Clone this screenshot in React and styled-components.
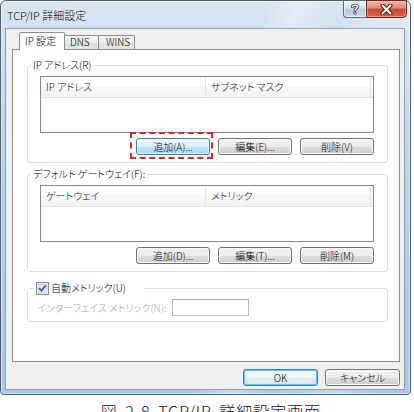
import React from "react";
import styled, { createGlobalStyle, css } from "styled-components";

const GlobalStyle = createGlobalStyle`
  html, body { margin: 0; padding: 0; background: #ffffff; }
  body {
    width: 414px;
    height: 412px;
    overflow: hidden;
    font-family: "Noto Sans CJK JP", "Noto Sans", sans-serif;
    color: #000;
  }
  #root { width: 414px; }
`;

const uiFont = css`
  font-family: "Noto Sans CJK JP", "Noto Sans", sans-serif;
  font-size: 10px;
  font-weight: 300;
  font-feature-settings: "palt";
`;

const Window = styled.div`
  box-sizing: border-box;
  width: 411px;
  border: 1px solid #4e5d72;
  border-radius: 6px 6px 4px 4px;
  padding: 0 5px 4px 4px;
  background:
    linear-gradient(100deg, rgba(255,255,255,0) 55%, rgba(255,255,255,0.35) 62%, rgba(255,255,255,0) 70%, rgba(255,255,255,0.3) 85%, rgba(255,255,255,0) 92%),
    linear-gradient(180deg, #dae5f1 0px, #d2e0ef 28px, #bcd3eb 120px, #a9c7e7 100%);
  box-shadow: inset 0 0 0 1px rgba(255, 255, 255, 0.55);
`;

const TitleBar = styled.div`
  display: flex;
  align-items: center;
  height: 27px;
  padding-left: 2px;
`;

const Title = styled.div`
  font-family: "Noto Sans CJK JP", "Noto Sans", sans-serif;
  font-size: 11px;
  font-weight: 300;
  color: #000;
  text-shadow: 0 0 6px rgba(255, 255, 255, 0.95);
`;

const Controls = styled.div`
  display: flex;
  margin-left: auto;
  align-self: flex-start;
  margin-top: -1px;
  margin-right: -2px;
`;

const CaptionButton = styled.div`
  box-sizing: border-box;
  height: 18px;
  display: flex;
  align-items: center;
  justify-content: center;
  ${(p) =>
    p.$close
      ? css`
          width: 41px;
          border: 1px solid #6e2418;
          border-radius: 0 0 4px 0;
          background: linear-gradient(180deg, #ecb4a8 0%, #dc8b7a 45%, #c8472f 50%, #d66650 100%);
          box-shadow: inset 0 0 0 1px rgba(255, 200, 190, 0.5);
        `
      : css`
          width: 23px;
          border: 1px solid #5b687b;
          border-right: none;
          border-radius: 0 0 0 4px;
          background: linear-gradient(180deg, #eef3f8 0%, #d8e2ed 45%, #bccadb 50%, #cbd8e6 100%);
          box-shadow: inset 0 0 0 1px rgba(255, 255, 255, 0.5);
        `}
`;

const Client = styled.div`
  background: #f0f0f0;
  border: 1px solid #8d9eb4;
  padding: 0 4px 3px 6px;
`;

const TabRow = styled.div`
  display: flex;
  align-items: flex-end;
  height: 21px;
  padding-left: 7px;
  margin-bottom: -1px;
`;

const Tab = styled.div`
  ${uiFont};
  position: relative;
  z-index: 1;
  box-sizing: border-box;
  width: ${(p) => p.$w}px;
  padding-left: ${(p) => p.$pl}px;
  border: 1px solid #898c95;
  border-radius: 2px 2px 0 0;
  & + & { margin-left: -1px; }
  ${(p) =>
    p.$active
      ? css`
          height: 18px;
          line-height: 16px;
          border-bottom: none;
          background: #ffffff;
        `
      : css`
          height: 14px;
          line-height: 12px;
          margin-bottom: 1px;
          border-bottom: none;
          background: linear-gradient(180deg, #f3f3f3 0%, #ebebeb 50%, #dedede 51%, #e6e6e6 100%);
        `}
`;

const Panel = styled.div`
  box-sizing: border-box;
  height: 313px;
  background: #ffffff;
  border: 1px solid #898c95;
  padding: 8px 0 0 14px;
  display: flex;
  flex-direction: column;
`;

const Group = styled.fieldset`
  box-sizing: border-box;
  width: 361px;
  margin: ${(p) => p.$mt || 0}px 0 0 0;
  min-width: 0;
  border: 1px solid #d5dfe5;
  border-radius: 3px;
  padding: ${(p) => p.$pad};
`;

const Legend = styled.legend`
  ${uiFont};
  display: flex;
  align-items: center;
  gap: 2px;
  line-height: 14px;
  height: 14px;
  padding: 0 ${(p) => p.$pr || 2}px 0 2px;
  margin-left: ${(p) => p.$ml}px;
  color: #000;
`;

const ListView = styled.div`
  box-sizing: border-box;
  height: 57px;
  border: 1px solid #828790;
  background: #ffffff;
`;

const ListHeader = styled.div`
  display: flex;
  height: 21px;
  box-sizing: border-box;
  border-bottom: 1px solid #e2e3e5;
  background: linear-gradient(180deg, #ffffff 0%, #ffffff 45%, #f6f7f8 46%, #f2f3f5 100%);
`;

const HeaderCell = styled.div`
  ${uiFont};
  box-sizing: border-box;
  width: ${(p) => p.$w}px;
  padding-left: 5px;
  line-height: 20px;
  border-right: 1px solid #e3e5e8;
  color: #111;
`;

const ButtonRow = styled.div`
  display: flex;
  justify-content: flex-end;
  gap: 8px;
  margin-top: 5px;
`;

const Button = styled.div`
  ${uiFont};
  position: relative;
  box-sizing: border-box;
  width: ${(p) => p.$w || 74}px;
  height: 17px;
  line-height: 15px;
  text-align: center;
  color: #000;
  border: 1px solid #707070;
  border-radius: 3px;
  background: linear-gradient(180deg, #f2f2f2 0%, #ebebeb 50%, #dddddd 51%, #cfcfcf 100%);
  box-shadow: inset 0 0 0 1px #fbfbfb;
  ${(p) =>
    p.$hot &&
    css`
      border-color: #3c7fb1;
      background: linear-gradient(180deg, #eaf6fd 0%, #d9f0fc 50%, #bee6fd 51%, #a7d9f5 100%);
      box-shadow: inset 0 0 0 1px #f4fbff;
    `}
  ${(p) =>
    p.$default &&
    css`
      border-color: #3c7fb1;
      background: linear-gradient(180deg, #f4f9fc 0%, #edf4f8 50%, #e0ebf2 51%, #d7e5ee 100%);
      box-shadow: inset 0 0 0 1px #64c6ef;
    `}
  ${(p) =>
    p.$marked &&
    css`
      &::after {
        content: "";
        position: absolute;
        top: -7px;
        bottom: -5px;
        left: -7px;
        right: -4px;
        border: 2px dashed #d9262b;
        pointer-events: none;
      }
    `}
`;

const MetricRow = styled.div`
  display: grid;
  grid-template-columns: 135px 77px;
  align-items: center;
`;

const DisabledLabel = styled.div`
  ${uiFont};
  color: #a3a3a3;
`;

const TextBox = styled.div`
  box-sizing: border-box;
  height: 17px;
  border: 1px solid #b9bcc2;
  border-top-color: #a8abb2;
  background: #ffffff;
`;

const Footer = styled.div`
  display: flex;
  justify-content: flex-end;
  gap: 7px;
  padding-top: 7px;
`;

const Caption = styled.div`
  margin-top: 6px;
  padding-left: 8px;
  font-family: "Noto Sans CJK JP", sans-serif;
  font-size: 16px;
  font-weight: 300;
  line-height: 20px;
  letter-spacing: 1px;
  word-spacing: 3px;
  text-align: center;
  color: #111;
`;

const HelpGlyph = () => (
  <svg width="10" height="12" viewBox="0 0 10 12">
    <path
      d="M2.5 3.8 C2.5 1.6 7.5 1.6 7.5 3.8 C7.5 5.4 5 5.6 5 7.4"
      fill="none"
      stroke="#3b4657"
      strokeWidth="3"
      strokeLinecap="round"
    />
    <path
      d="M2.5 3.8 C2.5 1.6 7.5 1.6 7.5 3.8 C7.5 5.4 5 5.6 5 7.4"
      fill="none"
      stroke="#ffffff"
      strokeWidth="1.3"
      strokeLinecap="round"
    />
    <circle cx="5" cy="10" r="1.6" fill="#3b4657" />
    <circle cx="5" cy="10" r="0.8" fill="#ffffff" />
  </svg>
);

const CloseGlyph = () => (
  <svg width="13" height="11" viewBox="0 0 13 11">
    <path d="M2.5 1.5 L10.5 9.5 M10.5 1.5 L2.5 9.5" stroke="#5a1a10" strokeWidth="4" strokeLinecap="round" />
    <path d="M2.5 1.5 L10.5 9.5 M10.5 1.5 L2.5 9.5" stroke="#ffffff" strokeWidth="2" strokeLinecap="round" />
  </svg>
);

const CheckBox = () => (
  <svg width="13" height="13" viewBox="0 0 13 13">
    <defs>
      <linearGradient id="cbg" x1="0" y1="0" x2="1" y2="1">
        <stop offset="0" stopColor="#cbd8e8" />
        <stop offset="1" stopColor="#f4f7fb" />
      </linearGradient>
    </defs>
    <rect x="0.5" y="0.5" width="12" height="12" fill="#f6f6f6" stroke="#8f8f8f" />
    <rect x="2" y="2" width="9" height="9" fill="url(#cbg)" stroke="#aeb9c6" strokeWidth="0.6" />
    <path d="M3.2 6.3 L5.4 8.8 L9.8 3.4" fill="none" stroke="#3d56a6" strokeWidth="1.7" />
  </svg>
);

const AddressGroup = ({ legend, cols, buttons, mt }) => (
  <Group $mt={mt} $pad="4px 13px 7px 12px">
    <Legend $ml={-9}>{legend}</Legend>
    <ListView>
      <ListHeader>
        {cols.map((c) => (
          <HeaderCell key={c.label} $w={c.w}>
            {c.label}
          </HeaderCell>
        ))}
      </ListHeader>
    </ListView>
    <ButtonRow>
      {buttons.map((b) => (
        <Button key={b.label} $hot={b.hot} $marked={b.marked}>
          {b.label}
        </Button>
      ))}
    </ButtonRow>
  </Group>
);

export default function App() {
  return (
    <>
      <GlobalStyle />
      <Window>
        <TitleBar>
          <Title>TCP/IP 詳細設定</Title>
          <Controls>
            <CaptionButton>
              <HelpGlyph />
            </CaptionButton>
            <CaptionButton $close>
              <CloseGlyph />
            </CaptionButton>
          </Controls>
        </TitleBar>
        <Client>
          <TabRow>
            <Tab $active $w={46} $pl={5}>
              IP 設定
            </Tab>
            <Tab $w={35} $pl={5}>
              DNS
            </Tab>
            <Tab $w={37} $pl={7}>
              WINS
            </Tab>
          </TabRow>
          <Panel>
            <AddressGroup
              legend="IP アドレス(R)"
              cols={[
                { label: "IP アドレス", w: 165 },
                { label: "サブネット マスク", w: 165 },
              ]}
              buttons={[
                { label: "追加(A)...", hot: true, marked: true },
                { label: "編集(E)..." },
                { label: "削除(V)" },
              ]}
            />
            <AddressGroup
              mt={4}
              legend="デフォルト ゲートウェイ(F):"
              cols={[
                { label: "ゲートウェイ", w: 165 },
                { label: "メトリック", w: 165 },
              ]}
              buttons={[
                { label: "追加(D)..." },
                { label: "編集(T)..." },
                { label: "削除(M)" },
              ]}
            />
            <Group $mt={9} $pad="4px 13px 5px 9px">
              <Legend $ml={-3} $pr={18}>
                <CheckBox />
                自動メトリック(U)
              </Legend>
              <MetricRow>
                <DisabledLabel>インターフェイス メトリック(N):</DisabledLabel>
                <TextBox />
              </MetricRow>
            </Group>
          </Panel>
          <Footer>
            <Button $w={75} $default>
              OK
            </Button>
            <Button $w={75}>キャンセル</Button>
          </Footer>
        </Client>
      </Window>
      <Caption>図 2-8 TCP/IP 詳細設定画面</Caption>
    </>
  );
}
